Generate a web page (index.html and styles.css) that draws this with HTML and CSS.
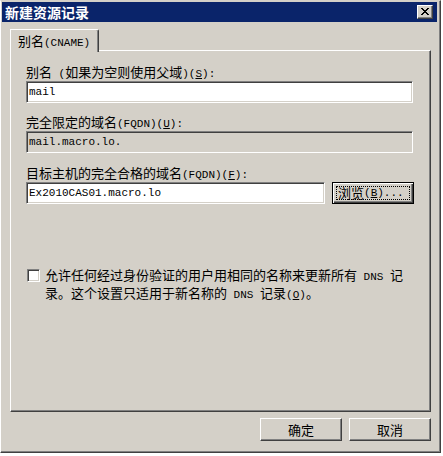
FILE: index.html
```html
<!DOCTYPE html>
<html lang="zh-CN">
<head>
<meta charset="utf-8">
<title>新建资源记录</title>
<link rel="stylesheet" href="styles.css">
</head>
<body>
<div class="window">
  <div class="titlebar">
    <span class="title">新建资源记录</span>
    <span class="close">
      <svg width="8" height="7" viewBox="0 0 8 7"><path d="M0 0h2v1h1v1h2v-1h1v-1h2v1h-1v1h-1v1h-1v1h1v1h1v1h1v1h-2v-1h-1v-1h-2v1h-1v1h-2v-1h1v-1h1v-1h1v-1h-1v-1h-1v-1h-1z" fill="#000"/></svg>
    </span>
  </div>
  <div class="client">
    <div class="tabs">
      <div class="tab">别名<span class="en">(CNAME)</span></div>
    </div>
    <div class="panel">
      <div class="field">
        <div class="label">别名<span class="en"> (</span>如果为空则使用父域<span class="en">)(<u>S</u>):</span></div>
        <div class="input wide">mail</div>
      </div>
      <div class="field f2">
        <div class="label">完全限定的域名<span class="en">(FQDN)(<u>U</u>):</span></div>
        <div class="input wide readonly">mail.macro.lo.</div>
      </div>
      <div class="field f3">
        <div class="label">目标主机的完全合格的域名<span class="en">(FQDN)(<u>F</u>):</span></div>
        <div class="row">
          <div class="input narrow">Ex2010CAS01.macro.lo</div>
          <div class="btn browse"><span class="focus">浏览<span class="en">(<u>B</u>)...</span></span></div>
        </div>
      </div>
      <div class="check">
        <span class="box"></span>
        <span class="check-text">允许任何经过身份验证的用户用相同的名称来更新所有<span class="en"> DNS </span>记<br>录。这个设置只适用于新名称的<span class="en"> DNS </span>记录<span class="en">(<u>O</u>)</span>。</span>
      </div>
    </div>
    <div class="buttons">
      <div class="btn push">确定</div>
      <div class="btn push">取消</div>
    </div>
  </div>
</div>
</body>
</html>
```

FILE: styles.css
```css
* { box-sizing: border-box; }
html, body { margin: 0; padding: 0; }
body {
  width: 443px;
  height: 456px;
  overflow: hidden;
  background: #ffffff;
  font-family: "Noto Sans CJK SC", "Liberation Sans", sans-serif;
  font-size: 13px;
  color: #000;
}
.en {
  font-family: "Liberation Mono", "Noto Sans CJK SC", monospace;
  font-size: 11px;
}
.window {
  width: 441px;
  height: 453px;
  background: #d4d0c8;
  border-top: 1px solid #d4d0c8;
  border-left: 1px solid #ffffff;
  border-right: 1px solid #404040;
  border-bottom: 1px solid #404040;
  box-shadow: inset -1px -1px #808080;
  padding: 1px 3px 3px 1px;
  display: flex;
  flex-direction: column;
}
.titlebar {
  height: 20px;
  background: #0a246a;
  display: flex;
  align-items: center;
  justify-content: space-between;
  padding: 0 4px 0 3px;
}
.title {
  color: #fff;
  font-weight: bold;
  font-size: 14px;
  line-height: 18px;
}
.close {
  width: 16px;
  height: 14px;
  background: #d4d0c8;
  border: 1px solid;
  border-color: #fff #404040 #404040 #fff;
  box-shadow: inset -1px -1px #808080;
  display: flex;
  align-items: center;
  justify-content: center;
  padding-bottom: 1px;
}
.close svg { display: block; }
.client {
  flex: 1;
  padding: 7px 6px 0 8px;
  display: flex;
  flex-direction: column;
}
.tabs {
  display: flex;
  height: 22px;
  position: relative;
  z-index: 1;
  margin-bottom: -1px;
}
.tab {
  width: 89px;
  height: 23px;
  background: #d4d0c8;
  border: 1px solid;
  border-color: #fff #404040 transparent #fff;
  border-bottom: none;
  box-shadow: inset -1px 0 #808080;
  border-top-right-radius: 2px;
  line-height: 20px;
  padding-left: 7px;
  padding-top: 1px;
}
.panel {
  height: 362px;
  border: 1px solid;
  border-color: #fff #404040 #404040 #fff;
  box-shadow: inset -1px -1px #808080;
  padding: 13px 0 0 15px;
  display: flex;
  flex-direction: column;
}
.label {
  line-height: 15px;
  height: 15px;
  margin-bottom: 2px;
  white-space: nowrap;
}
.f2 { margin-top: 11px; }
.f3 { margin-top: 12px; }
.input {
  height: 22px;
  background: #fff;
  border: 1px solid;
  border-color: #808080 #fff #fff #808080;
  box-shadow: inset 1px 1px #404040, inset -1px -1px #d4d0c8;
  padding: 0 2px;
  font-family: "Liberation Mono", monospace;
  font-size: 11px;
  line-height: 20px;
  white-space: nowrap;
}
.wide { width: 387px; }
.narrow { width: 299px; }
.readonly { background: #d4d0c8; }
.row {
  display: flex;
  gap: 7px;
}
.btn {
  background: #d4d0c8;
  display: flex;
  align-items: center;
  justify-content: center;
}
.browse {
  width: 82px;
  height: 22px;
  border: 1px solid #000;
  box-shadow: inset 1px 1px #fff, inset -1px -1px #404040, inset -2px -2px #808080;
  padding: 3px;
}
.focus {
  flex: 1;
  height: 100%;
  border: 1px dotted #000;
  display: flex;
  align-items: center;
  padding-left: 1px;
  line-height: 14px;
  white-space: nowrap;
}
.check {
  margin-top: 63px;
  display: flex;
  align-items: flex-start;
  gap: 5px;
  padding-left: 1px;
}
.box {
  flex: none;
  width: 13px;
  height: 13px;
  margin-top: 2px;
  background: #fff;
  border: 1px solid;
  border-color: #808080 #fff #fff #808080;
  box-shadow: inset 1px 1px #404040, inset -1px -1px #d4d0c8;
}
.check-text {
  line-height: 16px;
  white-space: nowrap;
}
.buttons {
  margin-top: 6px;
  display: flex;
  justify-content: flex-end;
  gap: 7px;
}
.push {
  width: 82px;
  height: 23px;
  border: 1px solid;
  border-color: #fff #404040 #404040 #fff;
  box-shadow: inset -1px -1px #808080;
  line-height: 20px;
}
```
